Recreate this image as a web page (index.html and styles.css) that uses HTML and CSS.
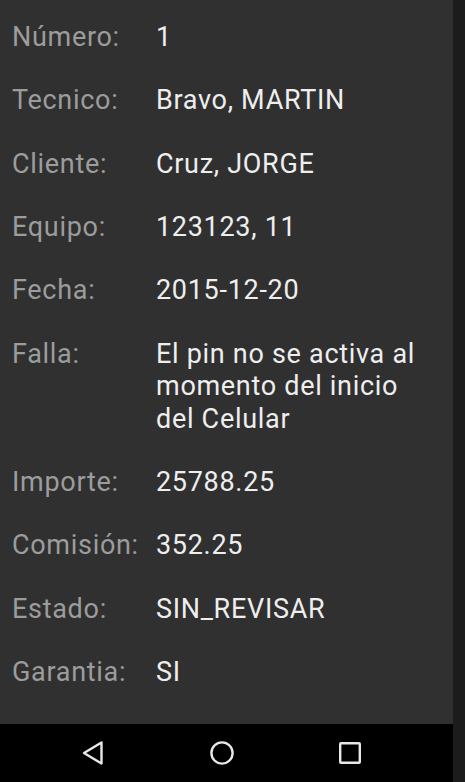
FILE: index.html
```html
<!DOCTYPE html>
<html lang="es">
<head>
<meta charset="utf-8">
<title>Detalle</title>
<link rel="stylesheet" href="styles.css">
</head>
<body>
<div class="screen">
  <div class="main">
    <div class="content">
      <div class="row"><div class="label">Número:</div><div class="value">1</div></div>
      <div class="row"><div class="label">Tecnico:</div><div class="value">Bravo, MARTIN</div></div>
      <div class="row"><div class="label">Cliente:</div><div class="value">Cruz, JORGE</div></div>
      <div class="row"><div class="label">Equipo:</div><div class="value">123123, 11</div></div>
      <div class="row"><div class="label">Fecha:</div><div class="value">2015-12-20</div></div>
      <div class="row"><div class="label">Falla:</div><div class="value">El pin no se activa al momento del inicio del Celular</div></div>
      <div class="row"><div class="label">Importe:</div><div class="value">25788.25</div></div>
      <div class="row"><div class="label">Comisión:</div><div class="value">352.25</div></div>
      <div class="row"><div class="label">Estado:</div><div class="value">SIN_REVISAR</div></div>
      <div class="row"><div class="label">Garantia:</div><div class="value">SI</div></div>
    </div>
    <div class="navbar">
      <svg class="nav-icon" width="24" height="26" viewBox="0 0 24 26"><path d="M20.5 2.5 L3 13 L20.5 23.5 Z" fill="none" stroke="#e8e8e8" stroke-width="2.4" stroke-linejoin="round"/></svg>
      <svg class="nav-icon" width="26" height="26" viewBox="0 0 26 26"><circle cx="13" cy="13" r="10.6" fill="none" stroke="#e8e8e8" stroke-width="2.4"/></svg>
      <svg class="nav-icon" width="24" height="24" viewBox="0 0 24 24"><rect x="2.2" y="2.2" width="19.6" height="19.6" rx="0.8" fill="none" stroke="#e8e8e8" stroke-width="2.4"/></svg>
    </div>
  </div>
  <div class="strip"></div>
</div>
</body>
</html>
```
FILE: styles.css
```css
html, body {
  margin: 0;
  padding: 0;
  background: #1c1c1c;
}
.screen {
  display: flex;
  width: 465px;
  height: 782px;
  overflow: hidden;
}
.main {
  width: 453px;
  display: flex;
  flex-direction: column;
}
.content {
  flex: 1;
  background: #303030;
  padding: 21px 12px 0 12px;
  display: flex;
  flex-direction: column;
  gap: 30.83px;
  font-family: Roboto, "Noto Sans", sans-serif;
  font-size: 27px;
  letter-spacing: 0.7px;
  line-height: 32.5px;
}
.row {
  display: grid;
  grid-template-columns: 144px 1fr;
}
.label {
  color: #9c9c9c;
}
.value {
  color: #eeeeee;
}
.strip {
  width: 12px;
  background: #1c1c1c;
}
.navbar {
  height: 58px;
  background: #000000;
  display: flex;
  align-items: center;
  gap: 103.5px;
  padding: 0 0 0 81px;
}
.nav-icon {
  display: block;
}
```
